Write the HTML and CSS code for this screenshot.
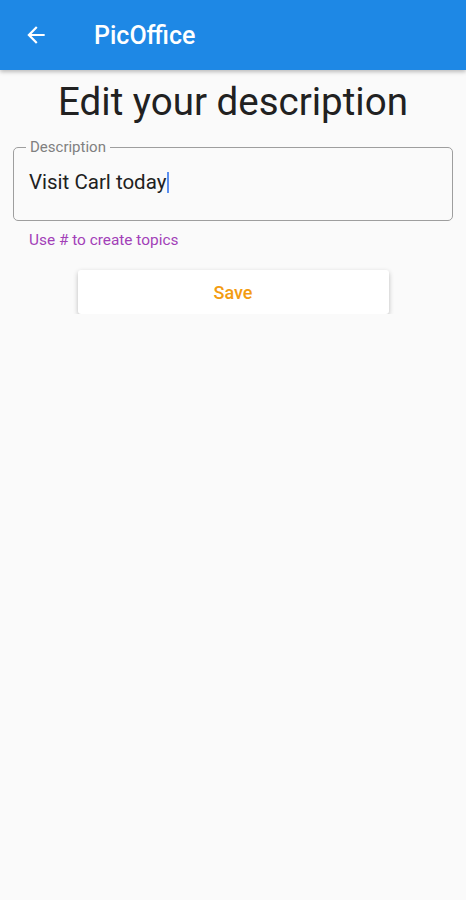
FILE: index.html
```html
<!DOCTYPE html>
<html lang="en">
<head>
    <meta charset="UTF-8">
    <meta name="viewport" content="width=device-width, initial-scale=1.0">
    <title>PicOffice</title>
    <link rel="stylesheet" href="styles.css">
</head>
<body>
    <header class="app-bar">
        <button class="back" aria-label="Back">
            <svg width="26" height="26" viewBox="0 0 24 24">
                <path d="M20 11H7.83l5.59-5.59L12 4l-8 8 8 8 1.41-1.41L7.83 13H20v-2z" fill="#fff"/>
            </svg>
        </button>
        <h1 class="title">PicOffice</h1>
    </header>

    <main class="content">
        <h2 class="heading">Edit your description</h2>

        <fieldset class="field">
            <legend>Description</legend>
            <div class="value">Visit Carl today<span class="caret"></span></div>
        </fieldset>
        <p class="helper">Use # to create topics</p>

        <button class="save">Save</button>
    </main>
</body>
</html>
```

FILE: styles.css
```css
body {
    margin: 0;
    background: #fafafa;
    font-family: Roboto, "Liberation Sans", sans-serif;
    color: #212121;
}
.app-bar {
    height: 70px;
    background: #1e88e5;
    display: flex;
    align-items: center;
    box-shadow: 0 2px 4px rgba(0,0,0,0.25);
}
.back {
    background: none;
    border: none;
    padding: 0;
    margin-left: 23px;
    width: 26px;
    height: 26px;
    display: flex;
}
.title {
    margin: 0 0 0 45px;
    color: #fff;
    font-size: 25px;
    font-weight: 500;
}
.content {
    padding: 0 13px;
}
.heading {
    margin: 11px 0 0;
    text-align: center;
    font-size: 38.5px;
    font-weight: 400;
    line-height: 42px;
}
.field {
    margin: 16px 0 0;
    padding: 0 15px;
    height: 82px;
    border: 1.5px solid #9e9e9e;
    border-radius: 5px;
    box-sizing: border-box;
}
.field legend {
    margin-left: -3px;
    padding: 0 4px;
    font-size: 15px;
    line-height: 16px;
    color: #808080;
}
.value {
    margin-top: 15px;
    font-size: 20.5px;
    line-height: 24px;
    display: flex;
    align-items: center;
}
.caret {
    width: 2px;
    height: 21px;
    margin-left: 1px;
    background: #5b8ff0;
}
.helper {
    margin: 10px 0 0 16px;
    font-size: 15.4px;
    line-height: 18px;
    color: #a23fb8;
}
.save {
    display: block;
    margin: 21px auto 0;
    width: 311px;
    height: 44px;
    background: #fff;
    border: none;
    border-radius: 3px;
    box-shadow: 0 2px 5px rgba(0,0,0,0.25);
    font-family: Roboto, "Liberation Sans", sans-serif;
    font-size: 18px;
    font-weight: 500;
    color: #f39c12;
}
```
